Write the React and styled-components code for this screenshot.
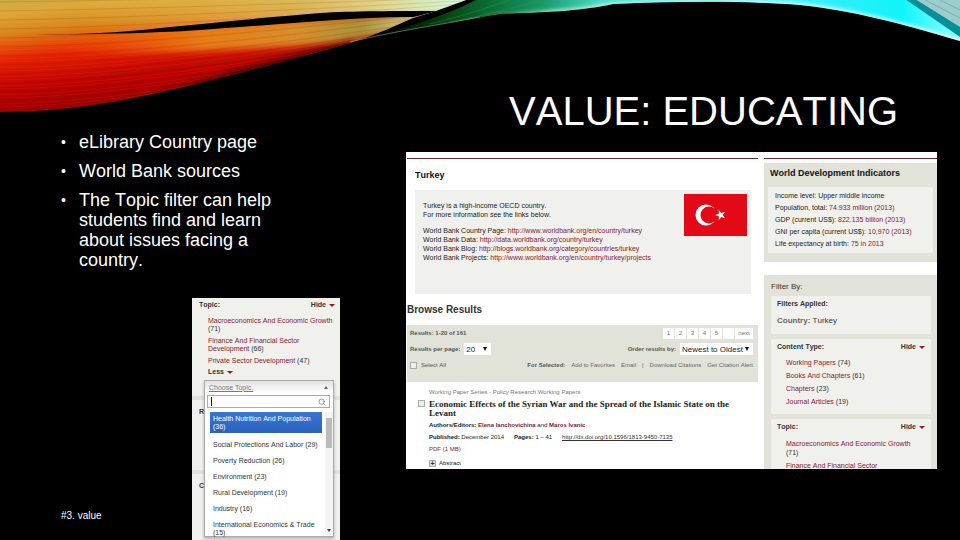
import styled, { createGlobalStyle, css } from "styled-components";
import { Search } from "lucide-react";

const GlobalStyle = createGlobalStyle`
  * {
    box-sizing: border-box;
  }
  body {
    margin: 0;
    background: #000;
    font-family: "Liberation Sans", Arial, sans-serif;
    font-kerning: none;
  }
  h1, h2, h3, p, ul {
    margin: 0;
    padding: 0;
  }
  ul {
    list-style: none;
  }
`;

const Slide = styled.main`
  position: relative;
  height: 100vh;
  overflow: hidden;
  background: #000;
  color: #fff;
  display: grid;
  grid-template-columns: 345fr 531fr;
  padding: 0 23px 0 61px;
`;

const Swoosh = styled.svg`
  position: absolute;
  top: 0;
  left: 0;
  width: 100%;
`;

const Side = styled.div`
  position: relative;
  display: flex;
  flex-direction: column;
  justify-content: space-between;
  min-height: 0;
  padding-top: 132px;
`;

const Bullets = styled.ul`
  display: flex;
  flex-direction: column;
  gap: 9px;
  width: 220px;
`;

const Bullet = styled.li`
  display: flex;
  font-size: 18px;
  line-height: 20px;

  &::before {
    content: "•";
    flex: 0 0 18px;
    font-size: 14px;
  }
`;

const SideBottom = styled.div`
  display: flex;
  align-items: flex-end;
`;

const SlideNote = styled.p`
  flex: 0 0 131px;
  padding-bottom: 18px;
  font-size: 10px;
  line-height: 12px;
`;

const Content = styled.div`
  position: relative;
  min-width: 0;
  padding-top: 88px;
`;

const Title = styled.h1`
  padding-right: 39px;
  font-size: 40px;
  line-height: 46px;
  font-weight: 400;
  text-align: right;
  white-space: nowrap;
`;

const Page = styled.section`
  display: grid;
  grid-template-columns: 351fr 173fr;
  gap: 6px;
  height: 317px;
  margin-top: 18px;
  padding: 6px 0 0 1px;
  overflow: hidden;
  background: #fff;
  color: #222;
  font-size: 7px;
  line-height: 9px;
  white-space: nowrap;
`;

const Column = styled.div`
  min-width: 0;
  border-top: 1px solid #7a2830;
`;

const Link = styled.a`
  color: ${(p) => (p.$dark ? "#333" : p.$muted ? "#666" : "#86202f")};
  font-weight: ${(p) => (p.$bold ? 700 : 400)};
  text-decoration: ${(p) => (p.$underline ? "underline" : "none")};
`;

const CountryName = styled.h2`
  padding: 11px 8px 10px;
  font-size: 9px;
  line-height: 10px;
  color: #111;
`;

const CountryBox = styled.div`
  display: flex;
  justify-content: space-between;
  height: 104px;
  margin: 0 7px 0 8px;
  padding: 4px 4px 0 8px;
  background: #f0f1ec;
`;

const CountryText = styled.div`
  display: flex;
  flex-direction: column;
  gap: 7px;
  padding-top: 7px;
`;

const BrowseTitle = styled.h2`
  padding: 10px 0 9px;
  font-size: 10px;
  line-height: 12px;
  color: #333;
`;

const Toolbar = styled.form`
  display: flex;
  flex-direction: column;
  gap: 4px;
  height: 57px;
  padding: 2px 5px 0 3px;
  background: #e1e3d9;
  color: #555;
  font-size: 6px;
`;

const ToolRow = styled.div`
  display: flex;
  align-items: center;
  justify-content: space-between;
  height: 12px;
`;

const Group = styled.div`
  display: flex;
  align-items: center;
  gap: ${(p) => p.$gap || 4}px;
`;

const Strong = styled.span`
  font-weight: 700;
`;

const FieldLabel = styled.label`
  font-weight: ${(p) => (p.$bold ? 700 : 400)};
`;

const SelectWrap = styled.div`
  position: relative;
  width: ${(p) => p.$width}px;
  height: 12px;

  &::after {
    content: "";
    position: absolute;
    right: 4px;
    top: 4px;
    border: 2px solid transparent;
    border-top: 4px solid #111;
    border-bottom: 0;
    pointer-events: none;
  }
`;

const Select = styled.select`
  display: block;
  width: 100%;
  height: 12px;
  padding: 0 2px;
  border: 0;
  appearance: none;
  background: #fff;
  color: #222;
  font: 8px "Liberation Sans", Arial, sans-serif;
`;

const Pager = styled.nav`
  display: flex;
  gap: 1px;
`;

const PageLink = styled.a`
  width: ${(p) => (p.$wide ? 18 : 11)}px;
  height: 11px;
  background: #fff;
  color: #55778c;
  line-height: 11px;
  text-align: center;
  text-decoration: none;
`;

const Check = styled.input`
  appearance: none;
  width: 7px;
  height: 7px;
  margin: 0;
  border: 1px solid #aaa;
  background: #eee;
`;

const Result = styled.article`
  display: grid;
  grid-template-columns: 7px 1fr;
  column-gap: 4px;
  padding: 6px 8px 0 11px;
  font-size: 6px;
`;

const ResultBody = styled.div`
  display: flex;
  flex-direction: column;
  gap: 3px;
`;

const Series = styled.p`
  grid-column: 2;
  padding-bottom: 3px;
  color: #777;
`;

const ResultTitle = styled.h3`
  color: #222;
  font: 700 9px/9px "Liberation Serif", "Times New Roman", serif;
  white-space: normal;
`;

const AbstractRow = styled.div`
  display: flex;
  align-items: center;
  gap: 3px;
  padding-top: 2px;
`;

const PlusBox = styled.button`
  width: 7px;
  height: 7px;
  padding: 0;
  border: 1px solid #aaa;
  background: #ddd;
  color: #333;
  font: 700 7px/5px "Liberation Sans", Arial, sans-serif;
`;

const Panel = styled.section`
  padding: ${(p) => p.$pad};
  margin-top: ${(p) => p.$top}px;
  background: #e1e3d9;
`;

const IndicatorTitle = styled.h2`
  padding: 0 2px 9px;
  font-size: 9px;
  line-height: 10px;
  color: #111;
`;

const Indicators = styled.ul`
  padding: 3px 7px;
  background: #f0f1ec;
  line-height: 12px;
`;

const FilterTitle = styled.h2`
  padding-bottom: 4px;
  font-size: 8px;
  line-height: 10px;
  font-weight: 400;
  color: #333;
`;

const Card = styled.div`
  height: ${(p) => p.$height}px;
  margin-bottom: 5px;
  padding: 3px 6px 0;
  background: #f0f1ec;
`;

const CardHead = styled.div`
  display: flex;
  justify-content: space-between;
  color: #333;
  line-height: 10px;
  font-weight: 700;
`;

const HideButton = styled.button`
  display: flex;
  align-items: center;
  gap: 3px;
  padding: 0;
  border: 0;
  background: none;
  color: #333;
  font: 700 7px/10px "Liberation Sans", Arial, sans-serif;

  &::after {
    content: "";
    border: 3px solid transparent;
    border-top: 3px solid #8b1c28;
    border-bottom: 0;
  }
`;

const CardList = styled.ul`
  display: flex;
  flex-direction: column;
  gap: 4px;
  padding: ${(p) => p.$top}px 0 0 9px;
  color: #333;
  line-height: ${(p) => p.$line || 9}px;
`;

const Applied = styled.p`
  padding-top: 7px;
  color: #333;
  font-size: 8px;

  ${Strong} {
    color: #666;
  }
`;

const TopicClip = styled.section`
  position: relative;
  width: 148px;
  height: 242px;
  padding: 2px 5px 0 7px;
  overflow: hidden;
  background: #f0f1ec;
  font-size: 7px;
  line-height: 9px;
  white-space: nowrap;
`;

const LessRow = styled.div`
  padding: 2px 0 0 9px;
`;

const Behind = styled.div`
  height: 74px;
  margin: ${(p) => (p.$first ? "19px" : 0)} -5px 0 -7px;
  padding: 7px;
  border-top: 4px solid #e1e3d9;
  color: #333;
  font-weight: 700;
`;

const Dropdown = styled.div`
  position: absolute;
  left: 12px;
  top: 82px;
  width: 130px;
  height: 157px;
  border: 1px solid #aaa;
  background: #fff;
  box-shadow: 0 2px 3px rgba(0, 0, 0, 0.25);
  color: #333;
`;

const DropHead = styled.button`
  display: flex;
  align-items: center;
  justify-content: space-between;
  width: 100%;
  height: 12px;
  padding: 0 5px 0 4px;
  border: 0;
  background: linear-gradient(#dfe2e6, #fff);
  color: #777;
  font: 7px "Liberation Sans", Arial, sans-serif;
  text-decoration: underline;

  &::after {
    content: "";
    border: 2px solid transparent;
    border-bottom: 3px solid #666;
    border-top: 0;
  }
`;

const SearchField = styled.label`
  display: flex;
  align-items: center;
  height: 13px;
  margin: 2px 3px 4px 2px;
  padding: 0 3px;
  border: 1px solid #aaa;
  color: #666;

  &::before {
    content: "";
    width: 1px;
    height: 9px;
    background: #111;
  }
`;

const SearchInput = styled.input`
  flex: 1;
  min-width: 0;
  height: 9px;
  padding: 0;
  border: 0;
  outline: 0;
  background: none;
  font-size: 7px;
`;

const DropBody = styled.div`
  display: flex;
  justify-content: space-between;
  height: 125px;
  padding-left: 5px;
  overflow: hidden;
`;

const Options = styled.ul`
  width: 112px;
`;

const Option = styled.li`
  padding: 4px 3px;
  line-height: 8px;
  white-space: normal;
  ${(p) =>
    p.$active &&
    css`
      padding: 3px 3px 2px;
      margin-bottom: 4px;
      background: linear-gradient(#3875d7, #2a62bc);
      color: #fff;
    `}
`;

const Scrollbar = styled.div`
  display: flex;
  flex-direction: column;
  align-items: center;
  justify-content: space-between;
  width: 8px;
  height: 123px;
  background: #f4f4f4;

  &::before {
    content: "";
    width: 6px;
    height: 30px;
    margin-top: 6px;
    background: #bbb;
  }
  &::after {
    content: "";
    margin-bottom: 3px;
    border: 2px solid transparent;
    border-top: 3px solid #444;
    border-bottom: 0;
  }
`;

const links = [
  ["World Bank Country Page: ", "http://www.worldbank.org/en/country/turkey"],
  ["World Bank Data: ", "http://data.worldbank.org/country/turkey"],
  ["World Bank Blog: ", "http://blogs.worldbank.org/category/countries/turkey"],
  ["World Bank Projects: ", "http://www.worldbank.org/en/country/turkey/projects"],
];

const indicators = [
  ["Income level: Upper middle income", ""],
  ["Population, total: ", "74.933 million (2013)"],
  ["GDP (current US$): ", "822.135 billion (2013)"],
  ["GNI per capita (current US$): ", "10,970 (2013)"],
  ["Life expectancy at birth: ", "75 in 2013"],
];

const contentTypes = [
  ["Working Papers", 74],
  ["Books And Chapters", 61],
  ["Chapters", 23],
  ["Journal Articles", 19],
];

const topics = [
  "Health Nutrition And Population (36)",
  "Social Protections And Labor (29)",
  "Poverty Reduction (26)",
  "Environment (23)",
  "Rural Development (19)",
  "Industry (16)",
  "International Economics & Trade (15)",
];

// thin light and dark strands running along the ribbon
const strands = Array.from({ length: 36 }, (_, i) => {
  const y = 2 + i * 3;
  const end = y * 0.35 - 6;
  return {
    d: `M0 ${y} C130 ${y - 2} 290 ${y * 0.72 - 4} 460 ${end}`,
    light: i % 3 !== 0,
  };
});

const Ribbon = () => (
  <Swoosh viewBox="0 0 960 113" aria-hidden="true">
    <defs>
      <linearGradient id="warm" gradientUnits="userSpaceOnUse" x1="0" y1="0" x2="12" y2="112">
        <stop offset="0" stopColor="#c9ab42" />
        <stop offset="0.12" stopColor="#dca83a" />
        <stop offset="0.3" stopColor="#d8861c" />
        <stop offset="0.4" stopColor="#e4580a" />
        <stop offset="0.54" stopColor="#e62002" />
        <stop offset="0.78" stopColor="#c20300" />
        <stop offset="1" stopColor="#a00000" />
      </linearGradient>
      <linearGradient id="pale" gradientUnits="userSpaceOnUse" x1="80" y1="40" x2="450" y2="0">
        <stop offset="0" stopColor="#e8d050" stopOpacity="0" />
        <stop offset="0.6" stopColor="#dcc466" stopOpacity="0.8" />
        <stop offset="0.85" stopColor="#e0dc98" />
        <stop offset="1" stopColor="#d4f8d4" />
      </linearGradient>
      <linearGradient id="orange" gradientUnits="userSpaceOnUse" x1="60" y1="0" x2="415" y2="0">
        <stop offset="0" stopColor="#f0700c" stopOpacity="0" />
        <stop offset="0.4" stopColor="#e87a14" />
        <stop offset="0.66" stopColor="#d88c28" />
        <stop offset="0.85" stopColor="#a8903a" />
        <stop offset="1" stopColor="#d0d08c" />
      </linearGradient>
      <linearGradient id="shade" gradientUnits="userSpaceOnUse" x1="150" y1="0" x2="340" y2="0">
        <stop offset="0" stopColor="#300" stopOpacity="0" />
        <stop offset="0.5" stopColor="#300" stopOpacity="0.7" />
        <stop offset="1" stopColor="#300" stopOpacity="0.7" />
      </linearGradient>
      <linearGradient id="cool" gradientUnits="userSpaceOnUse" x1="380" y1="18" x2="960" y2="0">
        <stop offset="0" stopColor="#010a02" />
        <stop offset="0.1" stopColor="#043a0c" />
        <stop offset="0.18" stopColor="#0a6a30" />
        <stop offset="0.28" stopColor="#18986a" />
        <stop offset="0.38" stopColor="#4cd8c4" />
        <stop offset="0.48" stopColor="#50e8ec" />
        <stop offset="0.65" stopColor="#60f0f4" />
        <stop offset="0.8" stopColor="#28f0f8" />
        <stop offset="0.9" stopColor="#10f4fa" />
        <stop offset="1" stopColor="#90ffff" />
      </linearGradient>
      <linearGradient id="edge" gradientUnits="userSpaceOnUse" x1="480" y1="0" x2="960" y2="0">
        <stop offset="0" stopColor="#a0f0c0" stopOpacity="0" />
        <stop offset="0.15" stopColor="#a8ffe0" />
        <stop offset="0.6" stopColor="#d8ffff" />
        <stop offset="1" stopColor="#f4ffff" />
      </linearGradient>
      <clipPath id="warmClip">
        <path d="M0 0H466L433 12L413 18C390 28 375 35 350 43C300 58 250 70 200 83C130 100 70 112 0 112Z" />
      </clipPath>
      <clipPath id="coolClip">
        <path d="M350 42C400 30 455 22 500 14C550 12 580 11 613 4C680 1 750 1 800 5C850 10 900 23 960 41V0H476C440 18 400 30 350 42Z" />
      </clipPath>
      <filter id="soft" x="-20%" y="-50%" width="140%" height="200%">
        <feGaussianBlur stdDeviation="3" />
      </filter>
      <filter id="glow" x="-10%" y="-50%" width="120%" height="200%">
        <feGaussianBlur stdDeviation="2" />
      </filter>
    </defs>
    <g clipPath="url(#warmClip)">
      <path d="M0 0H480V113H0Z" fill="url(#warm)" />
      <path d="M60 0H480V14C360 14 240 24 60 36Z" fill="url(#pale)" />
      <path d="M60 32C180 30 300 20 430 14L400 30L340 42C250 50 150 54 60 54Z" fill="url(#orange)" filter="url(#soft)" />
      <path d="M150 97C220 76 290 58 350 44L350 48L200 88L150 102Z" fill="url(#shade)" stroke="url(#shade)" strokeWidth="6" filter="url(#soft)" />
      {strands.map((s) => (
        <path key={s.d} d={s.d} fill="none" stroke={s.light ? "#ffd070" : "#5a1500"} strokeOpacity={s.light ? 0.06 : 0.12} />
      ))}
      <path d="M110 73C190 68 270 54 325 45" fill="none" stroke="#6a3010" strokeOpacity="0.5" />
    </g>
    <path d="M35 35C80 34 120 33 160 28C210 23 260 18 320 13C350 11 400 11 438 11L413 17C380 17 350 19 320 21C260 25 200 31 160 32C120 34 80 34 35 35Z" fill="#000" />
    <g clipPath="url(#coolClip)">
      <path d="M340 0H960V45H340Z" fill="url(#cool)" />
      <path d="M430 24C470 14 500 4 520 -4M450 22C500 12 530 4 550 -2" fill="none" stroke="#3a9a40" strokeOpacity="0.4" />
      <path d="M480 18C550 13 580 12 613 5C680 2 750 2 800 6C850 11 900 24 960 42" fill="none" stroke="url(#edge)" strokeWidth="5" filter="url(#glow)" />
      <path d="M905 -1H960V37Z" fill="#078f98" />
      <path d="M915 -1H960V27Z" fill="#9ccccc" />
      <path d="M925 0L960 18M940 0L960 10" stroke="#76b0b4" />
    </g>
    <path d="M350 42C400 30 440 25 480 17" fill="none" stroke="#9fc89a" strokeOpacity="0.5" />
  </Swoosh>
);

const Flag = () => (
  <svg width="63" height="42" viewBox="0 0 63 42" role="img" aria-label="Flag of Turkey">
    <path d="M0 0H63V42H0Z" fill="#e30a17" />
    <circle cx="22" cy="21" r="10.5" fill="#fff" />
    <circle cx="25" cy="21" r="8.5" fill="#e30a17" />
    <path d="M31 21L34.8 19.7L34.8 15.8L37.2 19L41 17.8L38.7 21L41 24.2L37.2 23L34.8 26.2L34.8 22.3Z" fill="#fff" />
  </svg>
);

const App = () => {
  return (
    <Slide>
      <GlobalStyle />
      <Ribbon />
      <Side>
        <Bullets>
          <Bullet>eLibrary Country page</Bullet>
          <Bullet>World Bank sources</Bullet>
          <Bullet>The Topic filter can help students find and learn about issues facing a country.</Bullet>
        </Bullets>
        <SideBottom>
          <SlideNote>#3. value</SlideNote>
          <TopicClip>
            <CardHead>
              <span>Topic:</span>
              <HideButton>Hide</HideButton>
            </CardHead>
            <CardList $top={7} $line={8}>
              <li><Link href="#macro">Macroeconomics And Economic Growth</Link><br />(71)</li>
              <li><Link href="#finance">Finance And Financial Sector<br />Development</Link> (66)</li>
              <li><Link href="#private">Private Sector Development</Link> (47)</li>
            </CardList>
            <LessRow>
              <HideButton>Less</HideButton>
            </LessRow>
            <Behind $first>R</Behind>
            <Behind>C</Behind>
            <Dropdown>
              <DropHead>Choose Topic.</DropHead>
              <SearchField>
                <SearchInput type="text" aria-label="Search topics" />
                <Search size={8} />
              </SearchField>
              <DropBody>
                <Options>
                  {topics.map((topic, i) => (
                    <Option key={topic} $active={i === 0}>{topic}</Option>
                  ))}
                </Options>
                <Scrollbar />
              </DropBody>
            </Dropdown>
          </TopicClip>
        </SideBottom>
      </Side>
      <Content>
        <Title>VALUE: EDUCATING</Title>
        <Page>
          <Column>
            <CountryName>Turkey</CountryName>
            <CountryBox>
              <CountryText>
                <p>Turkey is a high-income OECD country.<br />For more information see the links below.</p>
                <ul>
                  {links.map(([label, url]) => (
                    <li key={url}>{label}<Link href={url}>{url}</Link></li>
                  ))}
                </ul>
              </CountryText>
              <Flag />
            </CountryBox>
            <BrowseTitle>Browse Results</BrowseTitle>
            <Toolbar>
              <ToolRow>
                <Strong>Results: 1-20 of 161</Strong>
                <Pager>
                  {["1", "2", "3", "4", "5", ""].map((n) => (
                    <PageLink key={n} href="#page">{n}</PageLink>
                  ))}
                  <PageLink href="#next" $wide>next</PageLink>
                </Pager>
              </ToolRow>
              <ToolRow>
                <Group>
                  <FieldLabel $bold htmlFor="perPage">Results per page:</FieldLabel>
                  <SelectWrap $width={27}>
                    <Select id="perPage"><option>20</option></Select>
                  </SelectWrap>
                </Group>
                <Group>
                  <FieldLabel $bold htmlFor="order">Order results by:</FieldLabel>
                  <SelectWrap $width={73}>
                    <Select id="order"><option>Newest to Oldest</option></Select>
                  </SelectWrap>
                </Group>
              </ToolRow>
              <ToolRow>
                <Group>
                  <Check type="checkbox" id="all" />
                  <FieldLabel htmlFor="all">Select All</FieldLabel>
                </Group>
                <Group $gap={6}>
                  <Strong>For Selected:</Strong>
                  <Link $muted href="#fav">Add to Favorites</Link>
                  <Link $muted href="#email">Email</Link>
                  <span>|</span>
                  <Link $muted href="#cite">Download Citations</Link>
                  <Link $muted href="#alert">Get Citation Alert</Link>
                </Group>
              </ToolRow>
            </Toolbar>
            <Result>
              <Series>Working Paper Series - Policy Research Working Papers</Series>
              <Check type="checkbox" aria-label="Select result" />
              <ResultBody>
                <ResultTitle>Economic Effects of the Syrian War and the Spread of the Islamic State on the Levant</ResultTitle>
                <p><Strong>Authors/Editors:</Strong> <Link $bold href="#ianchovichina">Elena Ianchovichina</Link> and <Link $bold href="#ivanic">Maros Ivanic</Link></p>
                <Group $gap={10}>
                  <span><Strong>Published:</Strong> December 2014</span>
                  <span><Strong>Pages:</Strong> 1 – 41</span>
                  <Link $dark $underline href="http://dx.doi.org/10.1596/1813-9450-7135">http://dx.doi.org/10.1596/1813-9450-7135</Link>
                </Group>
                <p><Link href="#pdf">PDF (1 MB)</Link></p>
                <AbstractRow><PlusBox aria-label="Show abstract">+</PlusBox>Abstract</AbstractRow>
              </ResultBody>
            </Result>
          </Column>
          <Column>
            <Panel $top={4} $pad="5px 4px 9px">
              <IndicatorTitle>World Development Indicators</IndicatorTitle>
              <Indicators>
                {indicators.map(([label, value]) => (
                  <li key={label}>{label}{value && <Link href="#data">{value}</Link>}</li>
                ))}
              </Indicators>
            </Panel>
            <Panel $top={13} $pad="7px 6px 0 7px">
              <FilterTitle>Filter By:</FilterTitle>
              <Card $height={38}>
                <CardHead>Filters Applied:</CardHead>
                <Applied><Strong>Country:</Strong> Turkey</Applied>
              </Card>
              <Card $height={75}>
                <CardHead>
                  <span>Content Type:</span>
                  <HideButton>Hide</HideButton>
                </CardHead>
                <CardList $top={6}>
                  {contentTypes.map(([name, count]) => (
                    <li key={name}><Link href="#type">{name}</Link> ({count})</li>
                  ))}
                </CardList>
              </Card>
              <Card $height={60}>
                <CardHead>
                  <span>Topic:</span>
                  <HideButton>Hide</HideButton>
                </CardHead>
                <CardList $top={7}>
                  <li><Link href="#macro">Macroeconomics And Economic Growth</Link><br />(71)</li>
                  <li><Link href="#finance">Finance And Financial Sector</Link></li>
                </CardList>
              </Card>
            </Panel>
          </Column>
        </Page>
      </Content>
    </Slide>
  );
};

export default App;
